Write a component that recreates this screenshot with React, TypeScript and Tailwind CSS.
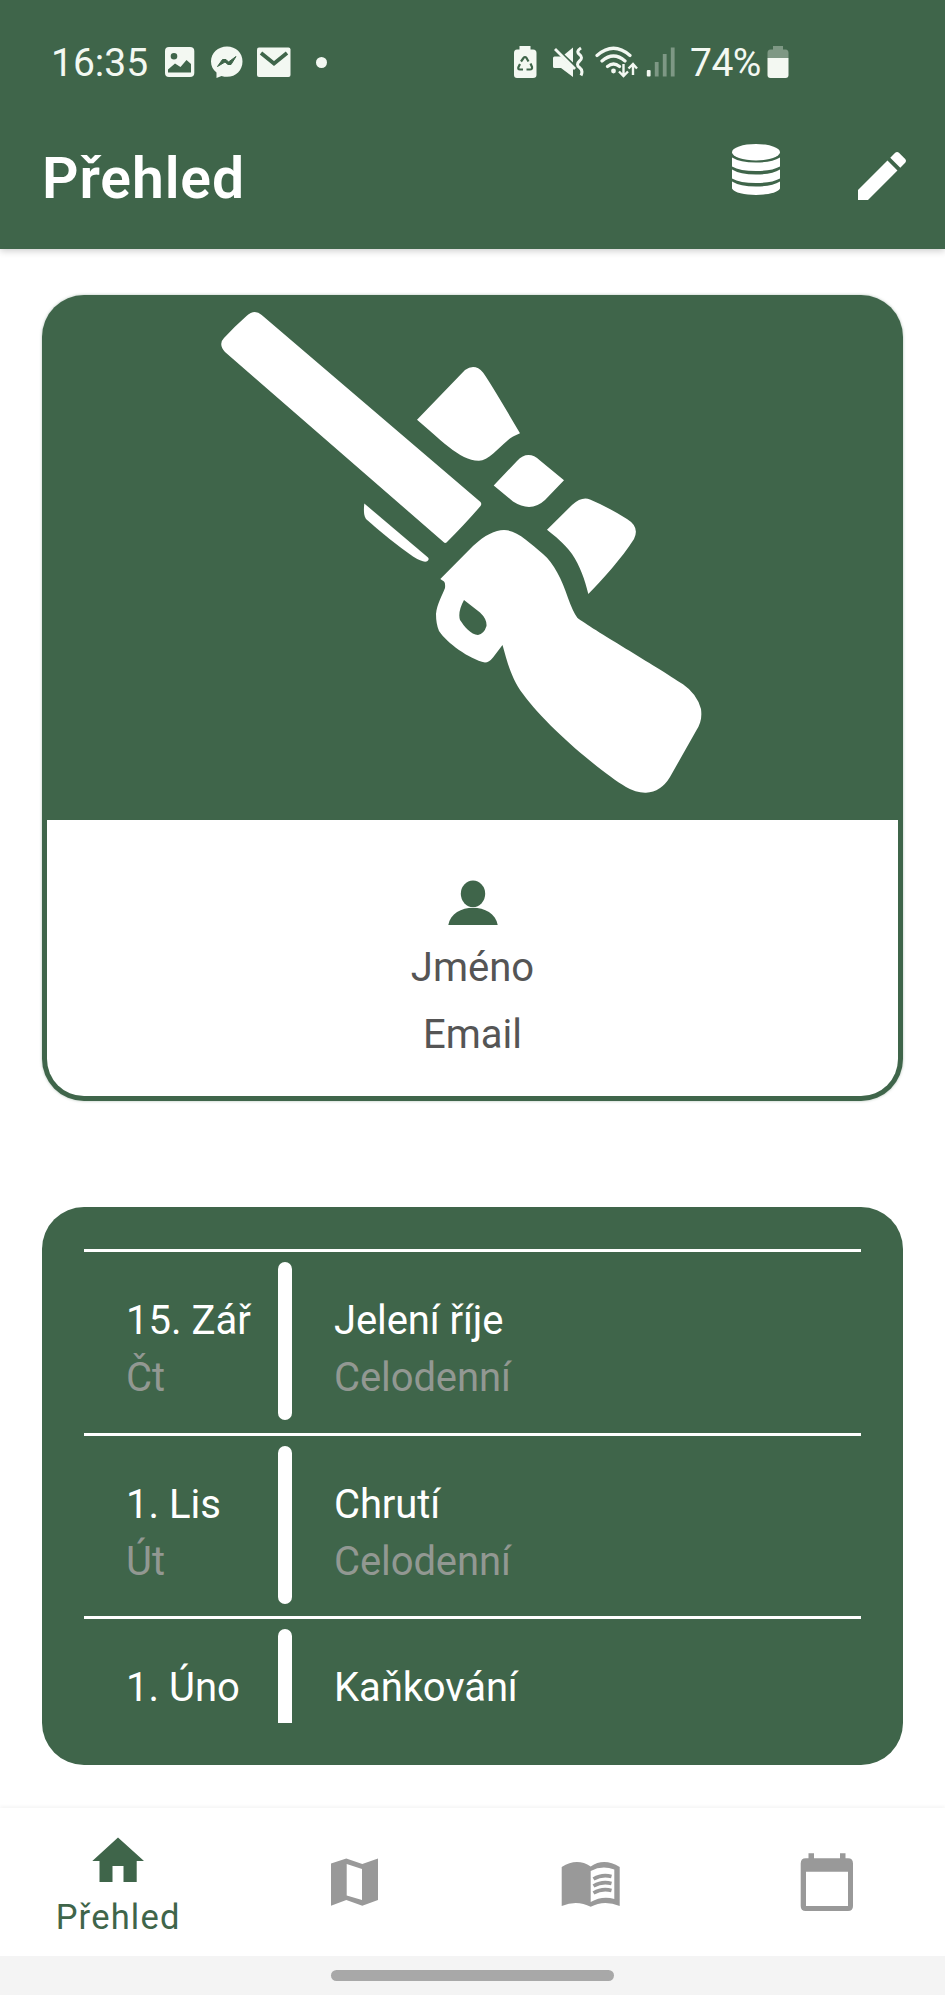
import type { ReactNode } from "react";

type IconProps = { box: string; className: string; children: ReactNode };

function Icon({ box, className, children }: IconProps) {
  return (
    <svg viewBox={box} className={`block shrink-0 ${className}`} fill="currentColor">
      {children}
    </svg>
  );
}

function StatusBar() {
  return (
    <div className="flex h-[124px] items-start pt-[40px] text-[#f3f8f2]">
      <div className="flex h-[44px] items-center">
        <span className="mt-[2px] ml-[51px] w-[114px] text-[39px] leading-[44px]">16:35</span>
        <Icon box="165 48 30 30" className="h-[30px] w-[30px]">
          <path
            fillRule="evenodd"
            d="M169 48H190Q194.300 48 194.300 52V74Q194.300 78 190 78H169Q165 78 165 74V52Q165 48 169 48ZM174 54A3.300 3.300 0 1 0 174 60.600A3.300 3.300 0 1 0 174 54ZM168 73.500H191V65L186.500 61L180.500 68L175 64.500L168 70.500Z"
          />
        </Icon>
        <Icon box="211 47 32 32" className="ml-[16px] h-[32px] w-[32px]">
          <path d="M227 47.500C218 47.500 211 54 211 62.500C211 67 213 71 216.500 73.500V79L221.500 77C233 80.500 242.500 73 242.500 62.500C242.500 54 236 47.500 227 47.500Z" />
          <path d="M217.500 67.500L222.500 60.500H226L228.500 63L236 57.500L231 65.500H228L225 63Z" fill="#3f654a" stroke="#3f654a" strokeWidth="1" />
        </Icon>
        <Icon box="257 48 34 30" className="ml-[14px] h-[30px] w-[34px]">
          <rect x="257" y="48.500" width="33.500" height="29.500" rx="2" />
          <path d="M261 54L274 64.500L287 54" fill="none" stroke="#3f654a" strokeWidth="3.800" />
        </Icon>
        <span className="ml-[25px] h-[11px] w-[11px] rounded-full bg-[#f3f8f2]" />
      </div>

      <div className="ml-[186px] flex h-[44px] items-center">
        <Icon box="513 46 24 32" className="h-[32px] w-[24px]">
          <path d="M519.500 46H530.500V49.500H533Q536.500 49.500 536.500 53V75Q536.500 78 533 78H517Q514 78 514 75V53Q514 49.500 517 49.500H519.500Z" />
          <path
            d="M521 61.500L523.500 58Q525 56 526.500 58L528.500 61.500M530.500 63.500L532 67Q532.500 69.500 530 69.500H526.500M523 69.500H520Q517.500 69.500 518.500 67L520 64"
            fill="none"
            stroke="#3f654a"
            strokeWidth="2.200"
            strokeLinejoin="round"
          />
        </Icon>
        <Icon box="552 46 32 32" className="ml-[15px] h-[32px] w-[32px]">
          <path d="M553 58Q553 56.500 554.500 56.500H561L573 68V77L561 68H554.500Q553 68 553 66.500ZM564.500 54.500L573 47.500V62.500Z" />
          <path d="M555 49L575 69" fill="none" stroke="currentColor" strokeWidth="2.800" />
          <path
            d="M581 48Q575.500 51.500 579.500 54.500T579.500 61Q575.500 64.500 579.500 67.500T581 75.500"
            fill="none"
            stroke="currentColor"
            strokeWidth="3"
          />
        </Icon>
        <Icon box="595 46 43 32" className="ml-[11px] h-[32px] w-[43px]">
          <path
            d="M597 55.500Q613.500 41 630 55.500M602 61Q613.500 51 625 61M607.500 66.500Q613.500 61.500 619.500 66.500"
            fill="none"
            stroke="currentColor"
            strokeWidth="3.200"
            strokeLinecap="round"
          />
          <circle cx="613.500" cy="71" r="2.400" />
          <path
            d="M623.500 64V75.500M619 71.500L623.500 76L628 71.500M633 75V64M628.500 68.500L633 64L637 68.500"
            fill="none"
            stroke="currentColor"
            strokeWidth="2.400"
          />
        </Icon>
        <Icon box="646 46 30 32" className="ml-[8px] h-[32px] w-[30px]">
          <rect x="646.800" y="70" width="3.800" height="6.500" rx="1" />
          <g opacity="0.350">
            <rect x="654.800" y="62" width="3.800" height="14.500" />
            <rect x="662.800" y="54" width="3.800" height="22.500" />
            <rect x="670.800" y="47.500" width="3.800" height="29" />
          </g>
        </Icon>
        <span className="mt-[2px] ml-[14px] w-[78px] text-[39px] leading-[44px] tracking-[-0.500px]">74%</span>
        <Icon box="767 46 22 32" className="-ml-px h-[32px] w-[22px]">
          <path
            d="M773 46H783V49.500H785.500Q788.500 49.500 788.500 53V58H767.500V53Q767.500 49.500 770.500 49.500H773Z"
            opacity="0.350"
          />
          <path d="M767.500 58H788.500V75Q788.500 78 785.500 78H770.500Q767.500 78 767.500 75Z" />
        </Icon>
      </div>
    </div>
  );
}

function Header() {
  return (
    <header className="z-10 h-[249px] shrink-0 bg-[#3f654a] shadow-[0_2px_7px_rgba(0,0,0,0.200)]">
      <StatusBar />
      <div className="flex h-[125px] items-start pl-[42px] text-white">
        <h1 className="mt-[21px] w-[690px] text-[57px] leading-[68px] font-semibold tracking-[0.900px]">Přehled</h1>
        <Icon box="732 144 48 51" className="mt-[20px] h-[51px] w-[48px]">
          <ellipse cx="756" cy="152.200" rx="24" ry="8.200" />
          <path d="M732 157.500Q740 162.500 756 162.500T780 157.500V166.500Q772 171 756 171T732 166.500Z" />
          <path d="M732 169.500Q740 174.500 756 174.500T780 169.500V178.500Q772 183 756 183T732 178.500Z" />
          <path d="M732 181.500Q740 186.500 756 186.500T780 181.500V188.500C776 197 736 197 732 188.500Z" />
        </Icon>
        <Icon box="0 0 512 512" className="mt-[20px] ml-[70px] h-[64px] w-[64px]">
          <path d="M64 368v80h80l235.727-235.729-79.999-79.998L64 368zm377.602-217.602c8.531-8.531 8.531-21.334 0-29.865l-50.135-50.135c-8.531-8.531-21.334-8.531-29.865 0l-39.468 39.469 79.999 79.998 39.469-39.467z" />
        </Icon>
      </div>
    </header>
  );
}

function ProfileCard() {
  return (
    <section className="mx-[42px] mt-[46px] flex h-[806px] shrink-0 flex-col rounded-[42px] bg-[#3f654a] px-[5px] pb-[5px] shadow-[0_0_3px_rgba(63,101,74,0.400)]">
      <div className="flex h-[525px] shrink-0 justify-center pt-[5px] text-white">
        <Icon box="47 300 851 519" className="h-[519px] w-[851px]">
          <path d="M246.500 316Q254.500 308.500 261.700 315L480.500 502Q482 504 480.500 506Q466 523 446.500 542.500Q445 543.500 443.500 542L225 352Q218 344 224 338Q234 327 246.500 316Z" />
          <path d="M364.300 503.500L428 557.500Q429.500 559 427.500 561Q424 563.500 413 556.500Q390 540.500 366 519Q363 515 364.300 503.500Z" />
          <path d="M417 419.700L465 370Q475 363 483 372.500Q490 382 520 433.300Q511 437 507 441C498 448.500 488 460.700 479 460.700C460 461 439 438 417 419.700Z" />
          <path d="M493.700 485.500L517 461Q528 449.500 540 460.500L564 480.300L545 500Q531 513 513 501.500Z" />
          <path d="M547 529.700L572 505Q582 496 590 499.500Q608 507 627 519Q640 527 634 539C622 558 602 580 588.300 594C585 580 580 566 572 554C564 543 555 536 547 529.700Z" />
          <path
            fillRule="evenodd"
            d="M440.300 579L473 546C485 535 495 530 504 530C517 530 530 543 543 554C554 563 562 580 568 598Q573 612 577.300 617.700C592 629 656 666 683 684.300Q697 694 701 709C702 717 701 723 696 731L670 777Q661 792 646 792.700Q636 793 626 787C601 772 547 727 523 694C511 678 507 661 502.500 645L493 657.500Q489 662.500 485 662.500C469 659 447 643 439 631Q436 624 436 614C437 604 442 596 445 588Q445.500 583 444 581.500ZM464 600L480 612.500Q487 619 486.500 626Q484 634 478 635C471 635 464 626 460 620Q457.500 612 464 600Z"
          />
        </Icon>
      </div>
      <div className="flex flex-1 flex-col items-center rounded-b-[37px] bg-white text-[40px] text-[#555555]">
        <Icon box="448 880 50 45" className="mt-[60px] h-[45px] w-[50px] text-[#3f654a]">
          <ellipse cx="473" cy="893.800" rx="12.200" ry="13.200" />
          <path d="M448.300 925C452 902 494 902 497.700 925Z" />
        </Icon>
        <p className="mt-[14px] leading-[57px]">Jméno</p>
        <p className="mt-[10px] leading-[57px]">Email</p>
      </div>
    </section>
  );
}

const events = [
  { date: "15. Zář", day: "Čt", title: "Jelení říje" },
  { date: "1. Lis", day: "Út", title: "Chrutí" },
  { date: "1. Úno", day: "Po", title: "Kaňkování" },
];

function EventList() {
  return (
    <section className="mx-[42px] mt-[106px] h-[558px] shrink-0 rounded-[42px] bg-[#3f654a] px-[42px] pt-[42px] pb-[42px]">
      <div className="h-[474px] overflow-hidden">
        {events.map((event, index) => (
          <div
            key={event.date}
            className="flex h-[183.600px] items-start border-t-[3px] border-white text-[40px] leading-[57px] text-white"
          >
            <div className="mt-[40px] w-[194px] pl-[42px] whitespace-nowrap">
              <p>{event.date}</p>
              {index < 2 && <p className="text-[#929892]">{event.day}</p>}
            </div>
            <div className="mt-[10px] h-[158px] w-[14px] shrink-0 rounded-full bg-white" />
            <div className="mt-[40px] ml-[42px] tracking-[-0.100px]">
              <p>{event.title}</p>
              {index < 2 && <p className="text-[#929892]">Celodenní</p>}
            </div>
          </div>
        ))}
      </div>
    </section>
  );
}

function TabBar() {
  return (
    <nav className="mt-[43px] grid h-[148px] shrink-0 grid-cols-4 bg-white text-[#999999] shadow-[0_-2px_3px_rgba(0,0,0,0.040)]">
      <div className="flex flex-col items-center text-[#3f654a]">
        <Icon box="92 1837 52 45" className="mt-[29px] h-[45px] w-[52px]">
          <path d="M118 1837.500L144 1861H136.700V1882H123.500V1866H112.500V1882H99.500V1861H92.300Z" />
        </Icon>
        <span className="mt-[15px] text-[34.500px] leading-[40px] tracking-[1.200px]">Přehled</span>
      </div>
      <div className="flex justify-center">
        <Icon box="331 1858 47 48" className="mt-[50px] h-[48px] w-[47px]">
          <path
            fillRule="evenodd"
            d="M331 1863.500L346.300 1858.500L362.300 1864L378 1858.500V1900L362.300 1905.700L346.300 1900L331 1905.700ZM346.700 1864V1895.500L362 1900V1869Z"
          />
        </Icon>
      </div>
      <div className="flex justify-center">
        <Icon box="561 1862 59 45" className="mt-[54px] h-[45px] w-[59px]">
          <path
            fillRule="evenodd"
            d="M561.700 1867Q577 1857.500 590.700 1866.500Q604 1857.500 619.700 1867V1906Q604 1899.500 590.700 1906.800Q577 1899.500 561.700 1906ZM590.700 1871V1902Q602 1895.500 614.300 1899V1869.500Q602 1865 590.700 1871Z"
          />
          <path
            d="M593.500 1879Q602 1874 611.500 1876.500M593.500 1886Q602 1881 611.500 1883.500M593.500 1893Q602 1888 611.500 1890.500"
            fill="none"
            stroke="currentColor"
            strokeWidth="3.600"
          />
        </Icon>
      </div>
      <div className="flex justify-center">
        <Icon box="800 1853 54 58" className="mt-[45px] h-[58px] w-[54px]">
          <path
            fillRule="evenodd"
            d="M808.500 1853.300H814V1858.300H840V1853.300H845.500V1858.300H848Q853 1858.300 853 1863.500V1906Q853 1911 848 1911H805.700Q800.700 1911 800.700 1906V1863.500Q800.700 1858.300 805.700 1858.300H808.500ZM806 1871.700V1906H848V1871.700Z"
          />
        </Icon>
      </div>
    </nav>
  );
}

export default function App() {
  return (
    <main className="flex h-[1995px] w-[945px] flex-col overflow-hidden bg-white font-[Roboto,sans-serif]">
      <Header />
      <ProfileCard />
      <EventList />
      <TabBar />
      <footer className="flex h-[39px] shrink-0 justify-center bg-[#f4f4f4] pt-[14px]">
        <div className="h-[11px] w-[283px] rounded-full bg-[#a8a8a8]" />
      </footer>
    </main>
  );
}
